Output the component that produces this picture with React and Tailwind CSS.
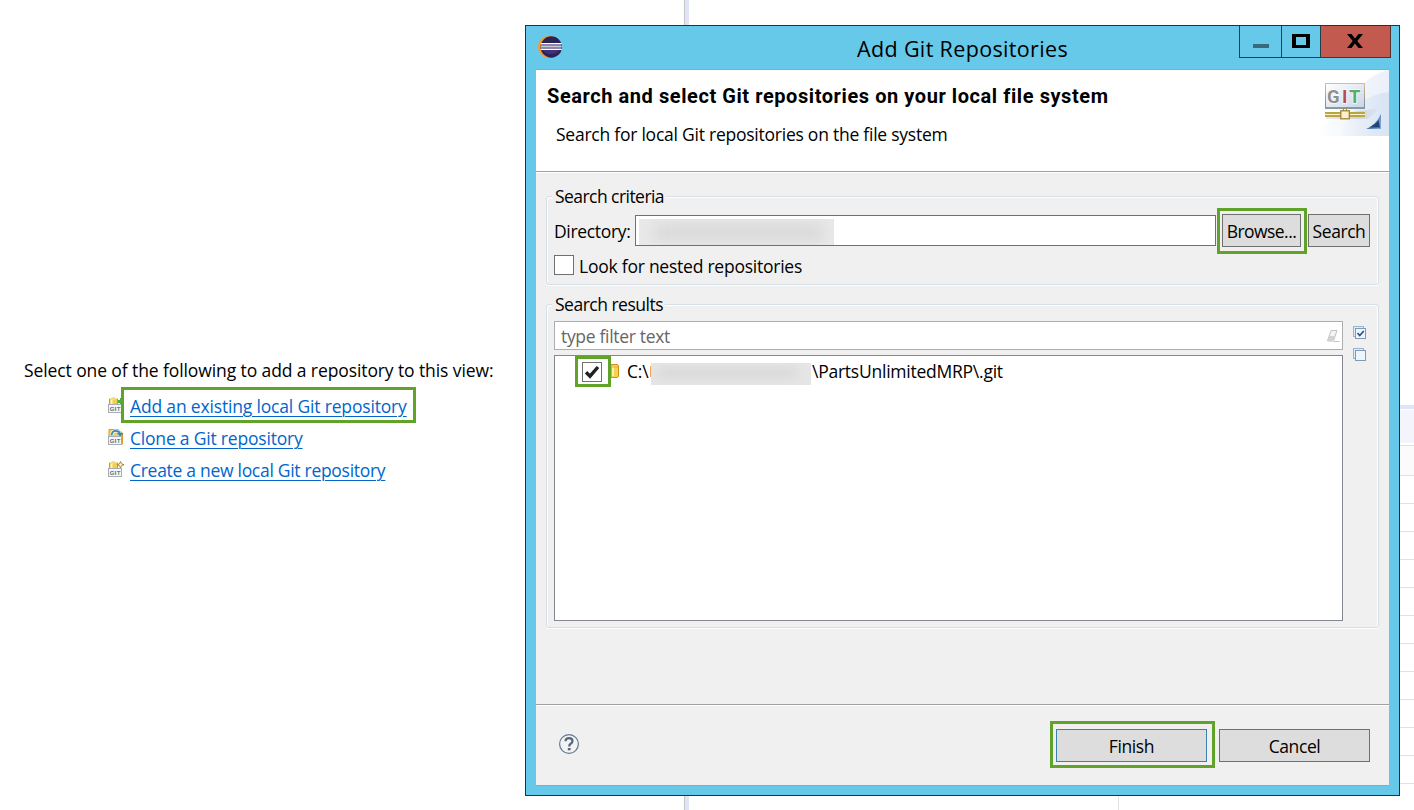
import React from "react";

function RepoIcon({ kind }) {
  return (
    <svg width="16" height="16" viewBox="0 0 16 16" className="shrink-0">
      <path d="M1.500 2 Q5 0 9.500 2 V8 H1.500 Z" fill="#f3cf4a" stroke="#c99a28" strokeWidth="1" />
      <path d="M3.500 2.500 V7" stroke="#fff3b5" strokeWidth="2" />
      <path d="M2 1.800 H9" stroke="#fff0a0" strokeWidth="1" />
      {kind === "add" && <path d="M13.500 1 V8 M10 4.500 H16" stroke="#4caf3c" strokeWidth="3" />}
      {kind === "clone" && (
        <g>
          <path d="M1 0.500 H10 L14.500 4 V15 H9 V8 H1 Z" fill="#f5cf5c" stroke="#d9972b" />
          <path d="M3.500 6 Q4.500 1.500 8 2 Q11.500 2 12 5" fill="none" stroke="#fff" strokeWidth="2.800" />
          <path d="M3.500 6 Q4.500 1.500 8 2 Q11.500 2 12 5" fill="none" stroke="#2f8fb0" strokeWidth="1.800" />
          <path d="M8.800 4 H15.500 L12.200 7.500 Z" fill="#2f8fb0" />
        </g>
      )}
      {kind === "create" && (
        <path d="M12.500 0.500 L13.500 2.800 L16 3.700 L13.500 4.700 L12.500 7 L11.500 4.700 L9.200 3.700 L11.500 2.800 Z" fill="#fff8d8" stroke="#a87a1c" strokeWidth="0.900" />
      )}
      <rect x="0.500" y="7.500" width="13" height="8" fill="#f4f6fa" stroke="#a3adbd" />
      <g fontFamily="Liberation Sans" fontWeight="bold" fontSize="6">
        <text x="1.800" y="13.700" fill="#666">G</text>
        <text x="6.700" y="13.700" fill="#b33f48">I</text>
        <text x="8.700" y="13.700" fill="#3f9558">T</text>
      </g>
    </svg>
  );
}

function EclipseIcon() {
  return (
    <svg width="26" height="24" viewBox="0 0 26 24">
      <circle cx="12" cy="12" r="10.900" fill="#f59a2b" />
      <circle cx="14.300" cy="12" r="10.700" fill="#2b2255" />
      <path d="M6 15 H22 Q20 19 14 19 Q8 19 6 15Z" fill="#43307c" />
      <rect x="4" y="8.500" width="20.500" height="6" fill="#8f86ab" />
      <path d="M3.800 8.500 H24.700 M3.800 14.500 H24.700" stroke="#fff" strokeWidth="1" />
      <path d="M3.800 11.500 H24.700" stroke="#c9c4d8" strokeWidth="1" />
    </svg>
  );
}

function GitBanner() {
  return (
    <svg width="75" height="66" viewBox="0 0 75 66">
      <defs>
        <linearGradient id="sky" x1="0" x2="1" y1="0" y2="0">
          <stop offset="0" stopColor="#fff" />
          <stop offset="0.400" stopColor="#f5f8fd" />
          <stop offset="1" stopColor="#eaf0fa" />
        </linearGradient>
        <linearGradient id="hill" x1="0" x2="1" y1="0" y2="0">
          <stop offset="0" stopColor="#d3e0f2" stopOpacity="0" />
          <stop offset="1" stopColor="#d3e0f2" stopOpacity="0.800" />
        </linearGradient>
        <linearGradient id="board" x1="0" x2="1" y1="0" y2="1">
          <stop offset="0" stopColor="#fff" />
          <stop offset="1" stopColor="#c9d5e8" />
        </linearGradient>
        <linearGradient id="frame" x1="0" x2="0" y1="0" y2="1">
          <stop offset="0" stopColor="#e8b888" />
          <stop offset="1" stopColor="#6f8f98" />
        </linearGradient>
        <linearGradient id="corner" x1="0" x2="1" y1="0" y2="0.600">
          <stop offset="0" stopColor="#b8cfe8" />
          <stop offset="0.500" stopColor="#4a74ad" />
          <stop offset="1" stopColor="#7fa4d0" />
        </linearGradient>
        <linearGradient id="shade" x1="0" x2="1" y1="0" y2="0">
          <stop offset="0" stopColor="#b9b5c4" stopOpacity="0.300" />
          <stop offset="0.600" stopColor="#b9b5c4" stopOpacity="0.500" />
          <stop offset="1" stopColor="#b9b5c4" stopOpacity="0" />
        </linearGradient>
      </defs>
      <path d="M0 66 Q14 52 35 30 Q54 4 75 0 V66 Z" fill="url(#sky)" />
      <path d="M26 66 Q38 26 75 22 V66 Z" fill="url(#hill)" />
      <path d="M12 46 L66 38 L54 49 H12 Z" fill="url(#shade)" />
      <rect x="11.500" y="13.500" width="39" height="24" fill="url(#board)" stroke="url(#frame)" />
      <path d="M11 38 H51" stroke="#849ba3" strokeWidth="2" />
      <g fontFamily="Roboto" fontWeight="bold" fontSize="18.500" stroke="#fff" strokeWidth="1.200" paintOrder="stroke">
        <text x="13" y="32.500" fill="#8f8f8f">G</text>
        <text x="28" y="32.500" fill="#b94a52">I</text>
        <text x="35" y="32.500" fill="#5daa68">T</text>
      </g>
      <rect x="11" y="42" width="40" height="5" fill="#b7a548" />
      <path d="M11 44.500 H51" stroke="#fff6c5" strokeWidth="1.200" />
      <path d="M29.500 38 V42 M32.500 38 V42" stroke="#a39343" />
      <rect x="26.800" y="40.800" width="8.500" height="8" fill="#fff0cd" stroke="#9f8430" strokeWidth="1.300" />
      <path d="M67 44 V59 H52 Q62 55 67 44 Z" fill="url(#corner)" />
      <path d="M55 57.500 Q62 54 64.500 50 L66 57.500 Z" fill="#1f4479" />
    </svg>
  );
}

function ListIcon({ checked }) {
  return (
    <svg width="13" height="13" viewBox="0 0 13 13">
      <rect x="0.500" y="0.500" width="10" height="10" fill="#dcecf8" stroke="#9bb4cc" />
      <rect x="2.500" y="2.500" width="10" height="10" fill="#edf6ff" stroke="#8199b8" />
      {checked && <path d="M4.500 7 L6.700 9.500 L10.800 5" fill="none" stroke="#2c4d7d" strokeWidth="1.600" />}
    </svg>
  );
}

const LINKS = [
  ["add", "Add an existing local Git repository", "tracking-[-0.17px]"],
  ["clone", "Clone a Git repository", "tracking-[-0.2px]"],
  ["create", "Create a new local Git repository", "tracking-[-0.29px]"],
];

function RepositoriesView() {
  return (
    <div className="w-[684px] h-full flex flex-col pt-[354px] pl-6">
      <p className="h-[32px] leading-[32px] tracking-[-0.1px]">Select one of the following to add a repository to this view:</p>
      <div className="pl-[84px] pt-1 flex flex-col">
        {LINKS.map(([kind, label, tracking]) => (
          <div key={kind} className="h-8 flex items-center">
            <span className="mb-[2px]"><RepoIcon kind={kind} /></span>
            <a className={"ml-[6px] text-[#0066cc] underline decoration-1 underline-offset-[3px] " + tracking}>{label}</a>
          </div>
        ))}
      </div>
    </div>
  );
}

function EditorArea() {
  return (
    <div className="flex-1 flex flex-col">
      <div className="h-[405px]" />
      <div className="h-[4px] bg-[#dfe4f6]" />
      <div className="h-[34px] bg-[#f4f5fc] border-t border-white" />
      <div className="h-[3px] border-b border-[#e1e1e1]" />
      <div className="h-[30px] bg-[#fbfbfb] border-b border-[#e1e1e1]" />
      {Array.from({ length: 11 }, (_, i) => (
        <div key={i} className="h-7 border-b border-[#e1e1e1]" />
      ))}
      <div className="flex-1 ml-[429px] border-l border-[#e1e1e1]" />
    </div>
  );
}

function TitleBar() {
  return (
    <div className="h-[43px] shrink-0 flex items-start">
      <div className="w-[244px] pl-[11px] pt-[9px]"><EclipseIcon /></div>
      <div className="flex-1 pl-[87px] h-[43px] flex items-center pt-[4px] text-[21.5px] tracking-[0.35px]">
        <span>Add Git Repositories</span>
      </div>
      <div className="h-[32px] mr-[8px] flex border-b border-l border-[#263e48]">
        <div className="w-[42px] border-r border-[#263e48] flex justify-center pt-[18px]">
          <span className="w-[16px] h-[4px] bg-[#376b7c]" />
        </div>
        <div className="w-[39px] border-r border-[#263e48] flex justify-center pt-[8px]">
          <span className="w-[18px] h-[14px] border-[3px] border-x-4 border-black" />
        </div>
        <div className="w-[70px] bg-[#c25a50] border-r border-[#55302e] pl-[26px] pt-[8px]">
          <svg width="16" height="14" viewBox="0 0 16 14">
            <path d="M0 0 H4.500 L8 4.500 L11.500 0 H16 L10.300 7 L16 14 H11.500 L8 9.500 L4.500 14 H0 L5.700 7 Z" fill="#000" />
          </svg>
        </div>
      </div>
    </div>
  );
}

const GROUP =
  "shrink-0 w-[833px] border border-[#d5dfe5] rounded-[3px] flex flex-col items-start shadow-[inset_1px_1px_0_#fff,inset_-1px_0_0_#fff,0_1px_0_#fff]";

function Legend({ children, className }) {
  return (
    <div className={"-mt-[15px] ml-[5px] pl-[3px] pr-[2px] h-[28px] leading-[28px] bg-[#f0f0f0] " + className}>{children}</div>
  );
}

const BUTTON = "h-[33px] bg-[#dddddd] border flex items-center justify-center pt-[1px] whitespace-nowrap";

function Header() {
  return (
    <div className="h-[103px] shrink-0 bg-white border-b border-white shadow-[inset_0_-1px_0_#a0a0a0] flex justify-between">
      <div className="pl-[11px] pt-[13px] flex flex-col">
        <h1 className="h-[26px] leading-[26px] font-['Roboto',sans-serif] font-bold text-[20px] tracking-[0.57px]">
          Search and select Git repositories on your local file system
        </h1>
        <p className="mt-[11px] ml-[9px] h-[28px] leading-[28px] tracking-[-0.24px]">
          Search for local Git repositories on the file system
        </p>
      </div>
      <GitBanner />
    </div>
  );
}

function Criteria() {
  return (
    <section className={GROUP + " h-[89px]"}>
      <Legend className="tracking-[-0.55px]">Search criteria</Legend>
      <div className="mt-[4px] pl-[7px] flex items-center h-[33px] w-full">
        <label className="w-[81px] pt-[2px] tracking-[-0.33px]">Directory:</label>
        <div className="mb-px w-[581px] h-[31px] border border-[#707070] bg-white pt-[3px] pl-[3px]">
          <div className="w-[195px] h-[26px] bg-[#e9e9e9] p-[7px] overflow-hidden">
            <div className="ml-2 w-[170px] h-[13px] bg-[#d3d3d3] blur-[8px]" />
          </div>
        </div>
        <div className="relative ml-[6px]">
          <button className={BUTTON + " w-[79px] border-[#707070] tracking-[-0.56px]"}>Browse...</button>
          <span className="absolute -left-[5px] -top-[6px] w-[90px] h-[46px] border-[3px] border-[#61a229]" />
        </div>
        <button className={BUTTON + " w-[62px] ml-[7px] border-[#707070] tracking-[-0.43px]"}>Search</button>
      </div>
      <div className="mt-[8px] pl-[7px] h-[20px] flex items-center">
        <span className="size-5 bg-white border border-[#707070]" />
        <span className="ml-[5px] pt-[3px] tracking-[-0.24px]">Look for nested repositories</span>
      </div>
    </section>
  );
}

function Results() {
  return (
    <section className={GROUP + " mt-[19px] h-[324px]"}>
      <Legend className="tracking-[-0.5px]">Search results</Legend>
      <div className="mt-[3px] pl-[7px] flex items-start">
        <div className="w-[789px] flex flex-col">
          <div className="h-[29px] bg-white border border-[#abadb3] flex items-center justify-between pl-[6px] pr-[2px]">
            <span className="pt-[1px] text-[#666] tracking-[-0.32px]">type filter text</span>
            <svg width="14" height="14" viewBox="0 0 14 14">
              <path d="M5 1.500 H11 L7.500 12 H1.500 Z" fill="#f4f4f4" stroke="#c2c2c2" strokeLinejoin="round" />
              <path d="M3.500 7 H9 L7.500 12 H1.500 Z" fill="#d2d2d2" />
              <path d="M8 12.500 H13.500" stroke="#c2c2c2" />
            </svg>
          </div>
          <div className="mt-[5px] h-[266px] bg-white border border-[#828790] pt-[1px] pl-[20px]">
            <div className="h-[30px] flex items-center">
              <span className="-mt-[1px] w-[36px] h-[31px] border-[3px] border-[#61a229] flex items-center justify-center pr-[2px] bg-white">
                <svg width="20" height="20" viewBox="0 0 20 20">
                  <rect x="0.500" y="0.500" width="19" height="19" fill="#fff" stroke="#707070" />
                  <path d="M4 10.300 L8 14.200 L16 5" fill="none" stroke="#212121" strokeWidth="3.400" />
                </svg>
              </span>
              <svg width="8" height="14" viewBox="0 0 8 14" className="mb-[2px]">
                <path d="M0 0.500 H6 Q7.500 1 7.500 2 V12 Q7.500 13 6 13.500 H0 Z" fill="#f5d44d" stroke="#d08f20" />
                <path d="M2 2 V12" stroke="#fff0a0" strokeWidth="2" />
                <path d="M0 3 H7" stroke="#e2ac35" />
              </svg>
              <span className="ml-[8px] w-[23px] mb-[1px] tracking-[-0.24px]">C:\</span>
              <span className="w-px h-[11px] mb-[2px] bg-[#f3a65a]" />
              <div className="mt-[4px] w-[160px] h-[22px] bg-[#e6e6e6] overflow-hidden p-[6px]">
                <div className="w-[140px] h-[8px] bg-[#d3d3d3] blur-[6px]" />
              </div>
              <span className="mb-[1px] ml-[1px] tracking-[-0.24px]">\PartsUnlimitedMRP\.git</span>
            </div>
          </div>
        </div>
        <div className="ml-[10px] pt-[5px] flex flex-col gap-[9px]">
          <ListIcon checked />
          <ListIcon />
        </div>
      </div>
    </section>
  );
}

function Footer() {
  return (
    <div className="flex-1 border-t border-[#a0a0a0] shadow-[inset_0_1px_0_#fff] flex items-start justify-between pt-[24px] pl-[22px] pr-[19px]">
      <svg width="22" height="22" viewBox="0 0 22 22" className="mt-[4px]">
        <circle cx="11" cy="11" r="9.400" fill="#f3f3f3" stroke="#64788f" strokeWidth="1.200" />
        <path d="M7.500 8.300 Q7.700 5.200 11 5.200 Q14.500 5.200 14.500 8 Q14.500 9.600 12.700 10.700 Q11.200 11.600 11.200 13.500" fill="none" stroke="#54677f" strokeWidth="2.200" />
        <rect x="9.800" y="15" width="2.800" height="2.300" fill="#54677f" />
      </svg>
      <div className="flex gap-[12px]">
        <div className="relative">
          <button className={BUTTON + " w-[151px] border-[#3c7fb1] tracking-[-0.4px]"}>Finish</button>
          <span className="absolute -left-[6px] -top-[8px] w-[165px] h-[47px] border-[3px] border-[#61a229]" />
        </div>
        <button className={BUTTON + " w-[151px] border-[#707070] tracking-[-0.42px]"}>Cancel</button>
      </div>
    </div>
  );
}

export default function App() {
  return (
    <main className="relative w-[1414px] h-[810px] overflow-hidden bg-white text-black font-['Open_Sans','Noto_Sans',sans-serif] text-[17.5px] whitespace-nowrap flex">
      <RepositoriesView />
      <div className="w-[5px] h-full bg-[#dfe4f6] border-l border-[#c4c4c4]" />
      <EditorArea />
      <span className="absolute left-[121px] top-[387px] w-[295px] h-[36px] border-[3px] border-[#61a229]" />
      <div className="absolute left-[525px] top-[25px] w-[875px] h-[771px] border border-[#20343d] bg-[#67c9e9] flex flex-col">
        <TitleBar />
        <div className="mx-[10px] h-[717px] border-y border-[#8faab5] bg-[#f0f0f0] flex flex-col">
          <Header />
          <div className="h-[531px] shrink-0 pt-[23px] pl-[10px] flex flex-col">
            <Criteria />
            <Results />
          </div>
          <Footer />
        </div>
      </div>
    </main>
  );
}
